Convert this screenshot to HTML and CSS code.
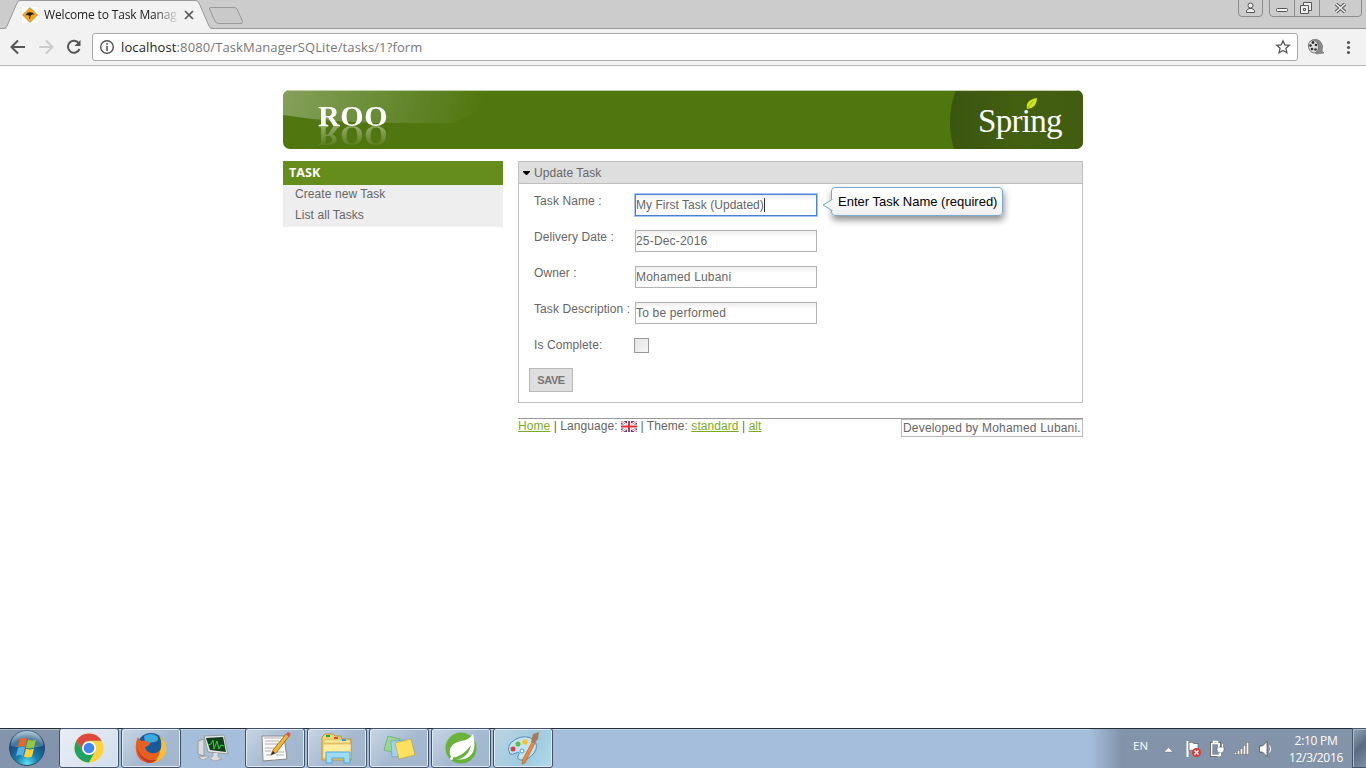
FILE: index.html
```html
<!DOCTYPE html>
<html lang="en">
<head>
<meta charset="utf-8">
<title>Welcome to Task Manager</title>
<link rel="stylesheet" href="styles.css">
</head>
<body>
<header class="tabstrip">
  <svg class="tab-shape" width="250" height="29" viewBox="0 0 250 29">
    <path d="M0 28.500H4Q6 28 7 26L17 3Q18 .5 20 .5H195Q198 .5 199 3L209 26Q210 28.500 213 28.500H250V29H0Z" fill="#f2f2f2" stroke="#999"/>
    <path d="M209.500 9Q209 7.500 211 7.500H234Q236 7.500 237 9L242.500 21.500Q243 23.500 241 23.500H219Q216 23.500 215 21Z" fill="#c9c9c9" stroke="#999"/>
  </svg>
  <div class="tab">
    <svg class="favicon" width="16" height="16" viewBox="0 0 16 16"><path fill="#fff" d="M0 0h16v16H0z"/><path d="M8 .5 15.500 8 8 15.500.5 8Z" fill="#f9a51a" stroke="#a87622" stroke-width=".6"/><path d="M3.500 8.500 5 6l3-1 3 1 1.500 2-1-.5-1.500 0-1.500 1.500-.5 3-1-.5.5-2.500-2-1-2 .5z" fill="#222"/></svg>
    <span class="tab-title">Welcome to Task Manag</span>
    <svg class="tab-close" width="10" height="10" viewBox="0 0 10 10"><path d="M1 1l8 8M9 1L1 9" stroke="#555" stroke-width="1.700"/></svg>
  </div>
  <svg class="win-controls" width="128" height="18" viewBox="0 0 128 18" fill="none" stroke="#8c8c8c">
    <path d="M.5 0V13Q.5 16.500 4 16.500H21Q24.500 16.500 24.500 13V0M31.500 0V13Q31.500 16.500 35 16.500H120Q123.500 16.500 123.500 13V0M56.500 0V16M81.500 0V16"/>
    <g stroke="#555"><rect x="38.500" y="8.500" width="11" height="3" rx="1" fill="#f4f4f4"/>
    <circle cx="12.500" cy="5.500" r="2.500" fill="#eee"/><path d="M8.500 12.500v-2l2.500-2h3l2.500 2v2z" fill="#eee"/>
    <path d="M65.500 5.500v-3h8v8h-3" fill="#eee"/><path d="M62.500 5.500h8v8h-8z" fill="#eee"/><path d="M65.500 8.500h2v2h-2z"/></g>
    <path d="M98 4l9 8M107 4l-9 8" stroke="#555" stroke-width="3.600"/><path d="M98 4l9 8M107 4l-9 8" stroke="#eee" stroke-width="1.600"/>
  </svg>
</header>
<nav class="toolbar">
  <svg class="nav-icons" width="92" height="36" viewBox="0 0 92 36" fill="none" stroke-width="2">
    <path d="M25 18H12M18 11.500 11.500 18 18 24.500" stroke="#555"/>
    <path d="M39 18h13M46 11.500 52.500 18 46 24.500" stroke="#ccc"/>
    <path d="M79 14.500A6 6 0 1 0 79.500 20" stroke="#555"/><path d="M80.500 11v6h-6z" fill="#555"/>
  </svg>
  <div class="address">
    <svg width="16" height="16" viewBox="0 0 16 16"><circle cx="8" cy="8" r="6.300" fill="none" stroke="#555" stroke-width="1.400"/><path d="M8 7v5M8 4v1.700" stroke="#555" stroke-width="1.600"/></svg>
    <span class="url"><b>localhost</b>:8080/TaskManagerSQLite/tasks/1?form</span>
    <svg class="star" width="16" height="16" viewBox="0 0 16 16"><path d="M8 1.800l1.800 4.100 4.500.4-3.400 3 1 4.400L8 11.400l-3.900 2.300 1-4.400-3.400-3 4.500-.4z" fill="none" stroke="#555" stroke-width="1.300"/></svg>
  </div>
  <svg class="tool-icons" width="68" height="36" viewBox="0 0 68 36">
    <path d="M14 11q5-2 8 1 4 4 2 10l2 2-8 1z" fill="#8a8a8a" stroke="#777" stroke-width=".7"/><ellipse cx="15.500" cy="17.500" rx="5" ry="6.500" transform="rotate(-12 15.500 17.500)" fill="#ddd" stroke="#666" stroke-width=".8"/>
    <g fill="#333"><circle cx="15" cy="13.500" r="1.400"/><circle cx="12.500" cy="16.500" r="1.300"/><circle cx="18" cy="16" r="1.300"/><circle cx="14" cy="20" r="1.300"/><circle cx="17.500" cy="20.500" r="1.300"/></g>
    <g fill="#555"><circle cx="50.500" cy="13.500" r="1.600"/><circle cx="50.500" cy="18.500" r="1.600"/><circle cx="50.500" cy="23.500" r="1.600"/></g>
  </svg>
</nav>
<main class="page">
  <div class="wrapper">
    <div class="banner">
      <svg class="banner-art" width="800" height="59" viewBox="0 0 800 59">
        <defs>
          <linearGradient id="gloss" gradientUnits="userSpaceOnUse" x1="0" y1="0" x2="178" y2="72"><stop offset="0" stop-color="#86a15a"/><stop offset=".45" stop-color="#6b8e38"/><stop offset="1" stop-color="#50760f"/></linearGradient>
          <linearGradient id="dark"><stop offset="0" stop-color="#3a550f"/><stop offset=".5" stop-color="#435f10"/><stop offset="1" stop-color="#415d10"/></linearGradient>
        </defs>
        <path fill="#50760f" d="M0 0h800v59H0z"/>
        <path d="M0 0H240L170 33H110Q50 33 0 25Z" fill="url(#gloss)"/>
        <path d="M673 0H800V59H671Q662 29 673 0Z" fill="url(#dark)"/>
        <path d="M0 .5H800" stroke="#c0d0a7"/>
        <path d="M744 19Q742 10 754 8Q754 18 744 19Z" fill="#d3e51a"/><path d="M744 19l6-8" stroke="#779b18" stroke-width=".7"/>
      </svg>
      <span class="roo">ROO</span>
      <span class="spring">Spring</span>
    </div>
    <div class="columns">
      <aside class="menu"><h2>TASK</h2><a>Create new Task</a><a>List all Tasks</a></aside>
      <section class="content">
        <div class="pane">
          <div class="pane-title"><svg width="9" height="5"><path d="M0 0h7v1l-3 3h-1L0 1z"/></svg><span>Update Task</span></div>
          <form class="form">
            <div class="row"><label>Task Name :</label><div class="field focused">My First Task (Updated)<i class="caret"></i></div>
              <div class="tooltip"><svg width="11" height="14" viewBox="0 0 11 14"><path d="M10.500 1 9.500 2 1 7l8.500 5 1 1" fill="#f7f7f7" stroke="#79a8cf"/></svg>Enter Task Name (required)</div></div>
            <div class="row"><label>Delivery Date :</label><div class="field">25-Dec-2016</div></div>
            <div class="row"><label>Owner :</label><div class="field">Mohamed Lubani</div></div>
            <div class="row"><label>Task Description :</label><div class="field">To be performed</div></div>
            <div class="row"><label>Is Complete:</label><div class="check"></div></div>
            <button type="button" class="save">SAVE</button>
          </form>
        </div>
        <footer class="footer">
          <div class="links"><a>Home</a> | Language: <svg width="16" height="11" viewBox="0 0 16 11"><path fill="#3a4c94" d="M0 0h16v11H0z"/><path d="M0 0l16 11M16 0L0 11" stroke="#fff" stroke-width="2.600"/><path d="M0 0l16 11M16 0L0 11" stroke="#e66" stroke-width=".9"/><path d="M8 0v11M0 5.500h16" stroke="#fff" stroke-width="4"/><path d="M8 0v11M0 5.500h16" stroke="#e0313b" stroke-width="2"/></svg> | Theme: <a>standard</a> | <a>alt</a></div>
          <div class="credit">Developed by Mohamed Lubani.</div>
        </footer>
      </section>
    </div>
  </div>
</main>
<footer class="taskbar">
  <div class="start"><svg width="40" height="40" viewBox="0 0 40 40">
    <defs><radialGradient id="orb" cx=".5" cy=".95" r=".9"><stop offset="0" stop-color="#5ee4f6"/><stop offset=".35" stop-color="#187eac"/><stop offset=".75" stop-color="#174c7a"/><stop offset="1" stop-color="#8fb0c8"/></radialGradient></defs>
    <circle cx="20" cy="20" r="17.500" fill="url(#orb)" stroke="#284a68"/><path d="M4 18A16 16 0 0 1 36 18Q20 22 4 18Z" fill="#fff" opacity=".22"/>
    <path d="M13 11q4-2 7 0l-2 8q-3-2-7 0z" fill="#ee6627"/><path d="M21 11.500q4 2 8 0l-2 8q-4 2-8 0z" fill="#91c83e"/><path d="M11 20q4-2 7 0l-2 8q-3-2-7 0z" fill="#55aee4"/><path d="M19 20.500q4 2 8 0l-2 8q-4 2-8 0z" fill="#ffd23b"/>
  </svg></div>
  <div class="task lit"><svg width="32" height="32" viewBox="0 0 32 32"><circle cx="16" cy="16" r="14.500" fill="#fdd33c"/><path d="M3.400 8.800A14.500 14.500 0 0 1 28.600 8.800H16L10 19.500Z" fill="#dd4b3e"/><path d="M3.400 8.800A14.500 14.500 0 0 0 16 30.500L22 19.500H10Z" fill="#1da462"/><circle cx="16" cy="16" r="7" fill="#fff"/><circle cx="16" cy="16" r="5.300" fill="#4286f4"/></svg></div>
  <div class="task"><svg width="32" height="32" viewBox="0 0 32 32"><circle cx="16" cy="15" r="14" fill="#1a5a9c"/><path d="M9 4q7-4 13 0 3 4-2 6-7 0-9 5z" fill="#39aadf"/><path d="M3 5q1 3 4 4 4-1 8 2-1 3-5 4 1 5 6 6 6 1 9-3 1 6 3 5-3 8-12 8-10 0-14-8Q-1 13 3 5Z" fill="#e66021"/><path d="M24 3q10 9 6 19-5 9-14 9 8-4 9-12 3-8-1-16z" fill="#fdbe2d"/><path d="M2 14q2 11 12 14 5 1 9-1-4 4-10 4Q2 26 2 14Z" fill="#c63824"/></svg></div>
  <div class="task bare"><svg class="monitor" width="32" height="32" viewBox="0 0 32 32"><path d="M1 9l6-2v17l-6-2z" fill="#ddd" stroke="#999"/><path d="M7 4l20-1 4 19-20-2z" fill="#e3e5e5" stroke="#999"/><path d="M9 6l17-1 3 15-16-2z" fill="#12401b"/><path d="M11 13l3-1 2-4 1 9 3-8 2 8 2-4 3 1" fill="none" stroke="#31d83d"/><path d="M16 21v3l-3 3 5 2 7-2-4-2v-4M1 25l9-1 2 1-6 3z" fill="#ddd" stroke="#999" stroke-width=".7"/></svg></div>
  <div class="task"><svg width="32" height="32" viewBox="0 0 32 32"><path d="M3 4h22l3 23-24 2z" fill="#fafafa" stroke="#888"/><path d="M5 6h17M6 9h14M6 12h13M6 16h9M6 19h6M7 23h5M17 23h8M18 20h7" stroke="#b0b0b0"/><path d="M12 23l2-5L27 2l3 2-13 17z" fill="#f9b42d" stroke="#77501a" stroke-width=".7"/><path d="M27 2l2-2 3 2-2 3z" fill="#df5343"/><path d="M12 23l2-4 2 2z" fill="#222"/></svg></div>
  <div class="task"><svg width="34" height="32" viewBox="0 0 34 32"><path d="M2 5l3-3h8l2 2h6l1 3h9v21H2z" fill="#f3d477" stroke="#b89639"/><path d="M4 8h26v3H4zM3 12h28v14H3z" fill="#ffec9e" stroke="#d0ad4e" stroke-width=".6"/><path d="M6 4h4" stroke="#22a839" stroke-width="2"/><path d="M14 6h4" stroke="#da4b46" stroke-width="2"/><path d="M22 8h4" stroke="#3d9ae0" stroke-width="2"/><path d="M6 31V20h24v11h-6v-5H12v5z" fill="#9cdbf3" stroke="#4ea8d3"/></svg></div>
  <div class="task"><svg width="32" height="32" viewBox="0 0 32 32"><path d="M5 4l12 3-4 14-12-3z" fill="#9bd694" stroke="#55a45b" stroke-width=".6"/><path d="M8 9l14-1 2 16-15 1z" fill="#9bd4f5" stroke="#5e9bc5" stroke-width=".6"/><path d="M12 11l16-4 4 16-16 4z" fill="#fde15e" stroke="#bd9b33" stroke-width=".6"/></svg></div>
  <div class="task"><svg width="34" height="34" viewBox="0 0 34 34"><circle cx="17" cy="17" r="15.500" fill="#69b33b"/><path d="M29 3Q33 19 26 25 19 31 8 27 5 24 6 18 8 12 17 10 25 9 29 3Z" fill="#fff"/><path d="M7 27Q19 26 27 14 24 29 8 29Z" fill="#69b33b"/><circle cx="7.500" cy="27.500" r="1.500" fill="#fff"/></svg></div>
  <div class="task active"><svg width="34" height="34" viewBox="0 0 34 34"><path d="M4 23Q-1 14 10 8 20 3 28 9 33 15 28 22 22 30 14 29 10 27 13 23 14 20 10 22 6 24 4 23Z" fill="#c3e3f3" stroke="#4b91b6"/><circle cx="7" cy="18" r="2.500" fill="#dd3e3b"/><circle cx="12" cy="13" r="2.500" fill="#5eb94b"/><circle cx="19" cy="11" r="2.800" fill="#f6c52d"/><circle cx="16" cy="20" r="2" fill="#e8f4f9" stroke="#579bc0"/><path d="M26 11l3 1-10 20-3 1 1-5z" fill="#ee893a" stroke="#a95627" stroke-width=".6"/><path d="M25 11l2-8 6-2-1 7-4 4z" fill="#a87b58"/></svg></div>
  <div class="tray">
    <span class="lang">EN</span>
    <svg width="120" height="40" viewBox="0 0 120 40"><path d="M8 24l4.500-4.500L17 24z" fill="#fff" stroke="#555" stroke-width=".4"/>
      <path d="M31.500 13v16" stroke="#fff" stroke-width="2"/><path d="M33 14.500q3-1 5 1h4v8h-4q-2-2-5-1z" fill="#fff" stroke="#444" stroke-width=".6"/><circle cx="40.500" cy="24.500" r="4.500" fill="#d83a34"/><path d="M38.500 22.500l4 4M42.500 22.500l-4 4" stroke="#fff" stroke-width="1.400"/>
      <path d="M55.500 15.500h8v12h-8z" fill="#8293a9" stroke="#444" stroke-width="3"/><path d="M55.500 15.500h8v12h-8zM57.500 13.500h4v2h-4z" fill="#8293a9" stroke="#fff" stroke-width="1.500"/><path d="M61 19h7v3q0 3-3.500 3T61 22z" fill="#fff" stroke="#444" stroke-width=".5"/><path d="M62.500 16v3M66.500 16v3M64.500 25v3h-3" fill="none" stroke="#fff"/>
      <path d="M79.500 27v-3M82.500 27v-5M85.500 27v-7M88.500 27v-10M91.500 27V14" stroke="#555" stroke-width="3"/><path d="M79.500 26.500v-2M82.500 26.500v-4M85.500 26.500v-6M88.500 26.500v-9M91.500 26.500V14.500" stroke="#f5f5f5" stroke-width="2"/>
      <path d="M103.500 18h3l4.500-4.500v15l-4.500-4.500h-3z" fill="#fff" stroke="#444" stroke-width=".7"/><path d="M113.500 17.500q2.500 3.500 0 7" stroke="#fff" fill="none"/>
    </svg>
    <div class="clock"><span>2:10 PM</span><span>12/3/2016</span></div>
    <div class="peek"></div>
  </div>
</footer>
</body>
</html>
```

FILE: styles.css
```css
* { box-sizing: border-box; }
body { margin: 0; width: 1366px; height: 768px; overflow: hidden; display: flex; flex-direction: column; background: #fff; color: #666; font: 12px/15px "Liberation Sans", Arial, sans-serif; letter-spacing: .08px; }
svg { display: block; flex: none; }

.tabstrip { position: relative; height: 29px; background: #ccc; border-bottom: 1px solid #999; display: flex; justify-content: space-between; flex: none; letter-spacing: 0; }
.tab-shape { position: absolute; left: 0; top: 0; }
.tab { position: relative; display: flex; align-items: center; padding: 2px 0 0 22px; height: 28px; font: 12px/18px "Open Sans", sans-serif; color: #222; }
.tab-title { width: 134px; margin-left: 6px; white-space: nowrap; letter-spacing: -.15px; -webkit-mask-image: linear-gradient(90deg, #000 110px, transparent 136px); }
.tab-close { margin-left: 6px; }

.tabstrip::after { content: ""; position: absolute; left: 7px; top: 28px; width: 203px; height: 1px; background: #f2f2f2; }
.toolbar { height: 37px; background: #f2f2f2; border-bottom: 1px solid #b6b6b6; display: flex; flex: none; }
.address { width: 1206px; height: 28px; margin-top: 4px; border: 1px solid #a9a9a9; border-radius: 3px; background: #fff; display: flex; align-items: center; padding: 0 6px; }
.url { margin-left: 6px; font: 13px/20px "Open Sans", sans-serif; letter-spacing: .12px; color: #777; flex: 1; white-space: nowrap; }
.url b { font-weight: normal; color: #222; }

.page { flex: 1; padding-top: 24px; }
.wrapper { width: 800px; margin: 0 auto; }
.banner { position: relative; height: 59px; border-radius: 7px; overflow: hidden; }
.roo { position: absolute; left: 35px; top: 10px; font: bold 30px/32px "Liberation Serif", serif; letter-spacing: .6px; color: #fff; -webkit-box-reflect: below -12px linear-gradient(0deg, rgba(0,0,0,.5), transparent 90%); }
.spring { position: absolute; left: 695px; top: 12px; font: 33px/38px "Liberation Serif", serif; letter-spacing: -.7px; color: #fff; }

.columns { display: flex; gap: 15px; margin-top: 12px; align-items: flex-start; }
.menu { width: 220px; height: 66px; background: #eee; }
.menu h2 { margin: 0; height: 24px; padding-left: 6px; background: #658d1b; color: #fff; font: bold 12.500px/23px "Open Sans", sans-serif; }
.menu a { display: block; padding-left: 12px; height: 21px; line-height: 19px; }
.content { width: 565px; }
.pane { height: 242px; border: 1px solid #bfbfbf; }
.pane-title { height: 22px; background: #dedede; border-bottom: 1px solid #bfbfbf; display: flex; align-items: center; padding: 2px 0 0 4px; gap: 2px; }
.form { padding: 10px 10px 0; }
.row { display: flex; height: 36px; padding-left: 5px; align-items: flex-start; }
.row label { width: 101px; white-space: nowrap; }
.field { width: 182px; height: 22px; border: 1px solid #b3b3b3; background: linear-gradient(#ededed, #fff 6px); line-height: 20px; white-space: nowrap; display: flex; letter-spacing: .18px; }
.focused { border-color: #4b82c9; box-shadow: 0 0 0 1px #a5c7f6; letter-spacing: .03px; }
.caret { width: 1px; height: 14px; margin-top: 3px; background: #333; }
.tooltip { position: relative; margin: -7px 0 0 14px; width: 172px; height: 29px; border: 1px solid #79a8cf; border-radius: 4px; background: linear-gradient(#fff 40%, #eee); color: #000; font-size: 13px; letter-spacing: 0; line-height: 27px; padding-left: 6px; white-space: nowrap; box-shadow: 1px 4px 7px rgba(0,0,0,.45); }
.tooltip svg { position: absolute; left: -10px; top: 10px; }
.check { width: 15px; height: 15px; margin-left: -1px; border: 1px solid #999; background: linear-gradient(135deg, #e5e5e5, #f7f7f7); }
.save { display: block; width: 44px; height: 24px; margin-top: -6px; padding: 0; background: #dedede; border: 1px solid #b8b8b8; color: #777; font: bold 11px/22px "Liberation Sans", Arial, sans-serif; letter-spacing: -.4px; }
.footer { margin-top: 15px; border-top: 1px solid #999; display: flex; justify-content: space-between; }
.links { white-space: pre; letter-spacing: .07px; }
.links svg { display: inline; vertical-align: -2px; }
.links a { color: #7aab27; text-decoration: underline; }
.credit { width: 182px; height: 18px; border: 1px solid #bbb; padding-left: 1px; line-height: 16px; white-space: nowrap; letter-spacing: .18px; }

.taskbar { height: 40px; flex: none; display: flex; background: linear-gradient(#242c38 0 1px, #c8d9eb 1px 2px, #a5bedb 2px); letter-spacing: 0; }
.start { width: 59px; padding-left: 7px; background: linear-gradient(#242c38 0 1px, #aebbc9 1px 2px, #8394ac 2px); }
.task { width: 60px; height: 40px; margin-right: 2px; border: 1px solid #425369; border-radius: 3px; box-shadow: inset 0 0 0 1px #e2eaf3; background: linear-gradient(135deg, #c8d6e5, #a5b9d0 55%, #a1b5ce); display: flex; align-items: center; justify-content: center; }
.lit { background: linear-gradient(135deg, #e9eef5, #d2deed); }
.bare { background: none; border-color: transparent; box-shadow: none; }
.active { background: linear-gradient(120deg, #bcd3e2, #9ecbe1 60%, #b2d9e9); }
.tray { margin-left: auto; width: 276px; display: flex; color: #fff; background: linear-gradient(#242c38 0 1px, transparent 1px), linear-gradient(90deg, #a5bedb, #8293aa 32px); font: 12px/17px "Open Sans", sans-serif; }
.lang { margin: 9px 0 0 43px; width: 23px; font-size: 11.500px; }
.clock { width: 68px; margin-left: 6px; padding-top: 4px; display: flex; flex-direction: column; align-items: center; white-space: nowrap; letter-spacing: -.3px; }
.peek { width: 14px; margin-left: auto; border: 1px solid #46566b; border-right: 0; box-shadow: inset 1px 1px #aebaca; background: linear-gradient(135deg, #95a3b5, #5b6c82 50%, #7e8ea3); }
```
